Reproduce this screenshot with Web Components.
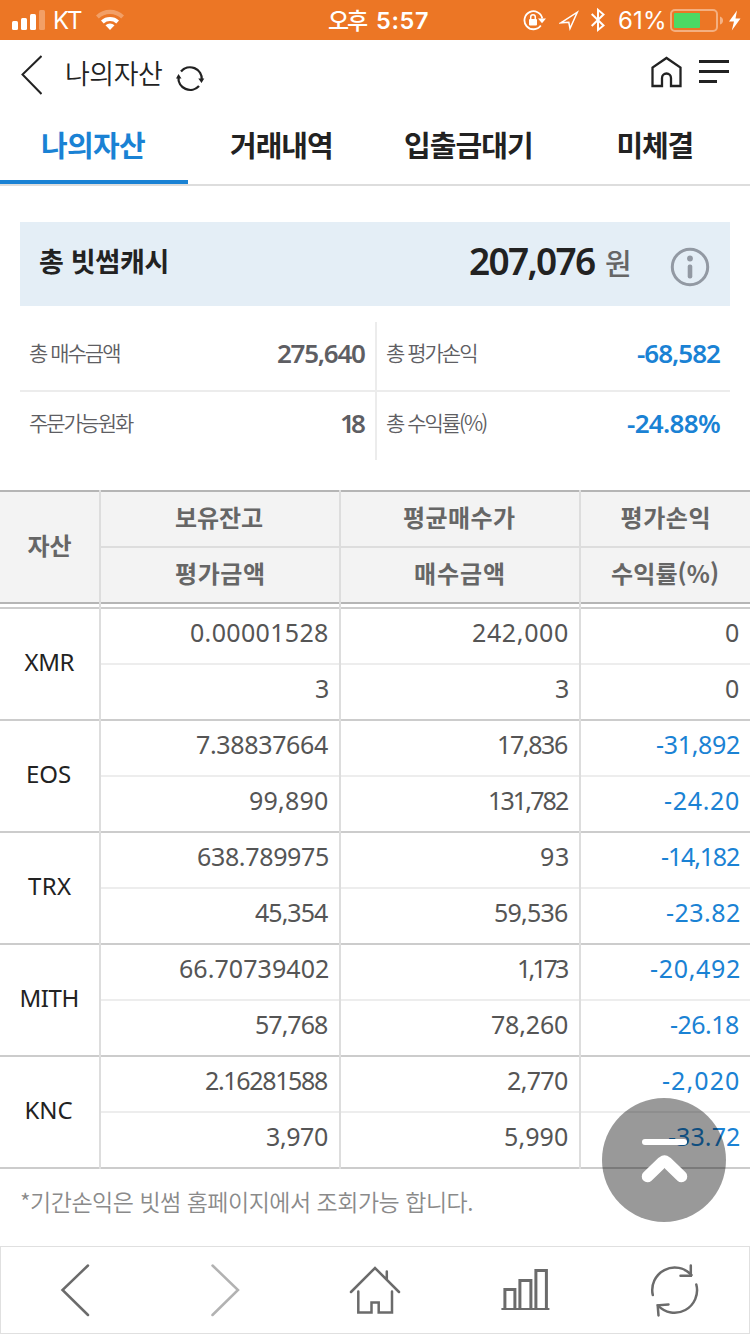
<!DOCTYPE html>
<html lang="ko">
<head>
<meta charset="utf-8">
<title>나의자산</title>
<style>
  body {
    margin: 0;
    background: #fff;
    color: #222;
    font-family: "Noto Sans CJK KR", sans-serif;
    line-height: 1;
  }
</style>
</head>
<body>
<wallet-app></wallet-app>

<script>
// One line of text spread over a fixed width (attribute w, in px)
class FitText extends HTMLElement {
  constructor () {
    super()
    this.shadow = this.attachShadow({ mode: 'open' })
  }

  connectedCallback () {
    this.shadow.innerHTML = /* html */ `
      <style>
        :host { display: block; flex: none; white-space: nowrap; line-height: 1; }
        span { display: block; }
      </style>
      <span><slot></slot></span>
    `
    const text = this.textContent
    const width = Number(this.getAttribute('w'))
    const style = getComputedStyle(this)
    const ctx = document.createElement('canvas').getContext('2d')
    ctx.font = `${style.fontWeight} ${style.fontSize} ${style.fontFamily}`
    const size = ctx.measureText(text)
    const ink = size.actualBoundingBoxRight + size.actualBoundingBoxLeft
    const span = this.shadow.querySelector('span')
    this.style.width = `${width}px`
    span.style.marginLeft = `${size.actualBoundingBoxLeft}px`
    if (text.length > 1) {
      span.style.letterSpacing = `${(width - ink) / (text.length - 1)}px`
    }
  }
}

class StatusBar extends HTMLElement {
  constructor () {
    super()
    this.shadow = this.attachShadow({ mode: 'open' })
  }

  connectedCallback () {
    this.shadow.innerHTML = /* html */ `
      <style>
        :host {
          display: flex;
          align-items: center;
          height: 40px;
          padding-left: 12px;
          background: #ec7625;
          color: #fff;
          font-family: Inter, "Noto Sans CJK KR", sans-serif;
          font-size: 24px;
        }
        svg { display: block; flex: none; }
        .carrier, .percent, .time { padding-top: 2px; }
        .carrier { margin-left: 10px; }
        .wifi { margin-left: 14px; }
        .time { margin-left: 205px; font-weight: 600; font-size: 23.5px; display: flex; gap: 9px; }
        .ampm { font-family: "Noto Sans CJK KR", sans-serif; font-weight: 500; font-size: 23px; margin-top: -1px; }
        .lock { margin-left: 95px; }
        .arrow { margin-left: 13px; }
        .bt { margin-left: 12px; }
        .percent { margin-left: 14px; }
        .battery { margin-left: 6px; }
        .bolt { margin-left: 5px; }
      </style>
      <svg width="33" height="40" fill="#fff">
        <rect y="21" width="6" height="9" rx="1.5"/>
        <rect x="9" y="18" width="6" height="12" rx="1.5"/>
        <rect x="18" y="14" width="6" height="16" rx="1.5"/>
        <rect x="27" y="10" width="6" height="20" rx="1.5" opacity=".3"/>
      </svg>
      <fit-text class="carrier" w="27">KT</fit-text>
      <svg class="wifi" width="28" height="40" fill="#fff">
        <path d="M0 15.500A20 20 0 0 1 28 15.500L25.200 18.500A16 16 0 0 0 2.800 18.500Z" opacity=".3"/>
        <path d="M5 20.500A13.500 13.500 0 0 1 23 20.500L20.300 23.400A9.500 9.500 0 0 0 7.700 23.400Z"/>
        <path d="M9.500 25.300A6.500 6.500 0 0 1 18.500 25.300L14 30Z"/>
      </svg>
      <div class="time"><fit-text class="ampm" w="39">오후</fit-text><fit-text w="51">5:57</fit-text></div>
      <svg class="lock" width="23" height="40" fill="none" stroke="#fff">
        <path d="M17.800 25.500A9 9 0 1 1 19.300 18.500" stroke-width="1.800"/>
        <path d="M15 18.500H23L19 23.300Z" fill="#fff" stroke="none"/>
        <rect x="6" y="19" width="8" height="6.500" rx="1" fill="#fff" stroke="none"/>
        <path d="M7.700 19.500V17a2.300 2.300 0 0 1 4.600 0V19.500" stroke-width="1.500"/>
      </svg>
      <svg class="arrow" width="20" height="40" fill="none" stroke="#fff" stroke-width="1.500">
        <path d="M1.800 22.800L18.300 12.200L11 28.500L9.800 22.300Z"/>
      </svg>
      <svg class="bt" width="14" height="40" fill="none" stroke="#fff" stroke-width="2">
        <path d="M.700 14L12.500 25.500L7 30V9.800L12.500 14.500L.700 26"/>
      </svg>
      <fit-text class="percent" w="45">61%</fit-text>
      <svg class="battery" width="54" height="40">
        <rect x="1" y="10" width="46" height="21" rx="4" fill="none" stroke="#fff" stroke-width="2" opacity=".42"/>
        <rect x="4" y="13" width="26" height="15" rx="1" fill="#4cd964"/>
        <path d="M50 16.500q3 1 3 4t-3 4z" fill="#fff" opacity=".45"/>
      </svg>
      <svg class="bolt" width="12" height="40" fill="#fff">
        <path d="M8 10.500L0 21.500H5L2.800 30.500L11.500 18.500H6.500Z"/>
      </svg>
    `
  }
}

class TitleBar extends HTMLElement {
  constructor () {
    super()
    this.shadow = this.attachShadow({ mode: 'open' })
  }

  connectedCallback () {
    this.shadow.innerHTML = /* html */ `
      <style>
        :host { display: flex; height: 66px; padding: 0 21px; align-items: flex-start; }
        svg { display: block; fill: none; stroke: #222; }
        .title { margin: 19px 0 0 25px; font-size: 27px; font-weight: 350; }
        .back { margin-top: 15px; }
        .reload { margin: 23px 0 0 14px; }
        .home { margin: 15px 0 0 auto; }
        .menu { margin: 20px 0 0 16px; }
      </style>
      <svg class="back" width="21" height="40"><path d="M20.500 1L1.500 19.500L20.500 39" stroke-width="2"/></svg>
      <fit-text class="title" w="95">${this.textContent}</fit-text>
      <svg class="reload" width="29" height="30" stroke-width="2.300">
        <path d="M2.500 14A11.800 11.800 0 0 0 23 23M25.800 17A11.800 11.800 0 0 0 5 8.500"/>
        <path d="M0 15.500L2.500 11L5.500 15.500ZM22.300 15.500H28.300L25.500 20Z" fill="#222" stroke="none"/>
      </svg>
      <svg class="home" width="32" height="33">
        <path d="M1.500 31V12.500L15.500 3L29.500 12.500V31H20V23a4.500 4.500 0 0 0-9 0v8Z" stroke-width="2.300"/>
      </svg>
      <svg class="menu" width="30" height="24"><path d="M0 1.500H30M0 11.500H30M0 21.500H18" stroke-width="3"/></svg>
    `
  }
}

class TabBar extends HTMLElement {
  constructor () {
    super()
    this.shadow = this.attachShadow({ mode: 'open' })
  }

  connectedCallback () {
    this.shadow.innerHTML = /* html */ `
      <style>
        :host {
          display: grid;
          grid-template-columns: 188px 187px 188px 187px;
          height: 78px;
          border-bottom: 2px solid #ddd;
          font-size: 29px;
          font-weight: 700;
        }
        div { display: flex; justify-content: center; padding: 24px 2px 0 0; }
        .on { color: #1a82d4; border-bottom: 4px solid #1a82d4; padding-right: 0; }
      </style>
      <div class="on"><fit-text w="102">나의자산</fit-text></div>
      <div><fit-text w="101">거래내역</fit-text></div>
      <div><fit-text w="126">입출금대기</fit-text></div>
      <div><fit-text w="74">미체결</fit-text></div>
    `
  }
}

class CashBanner extends HTMLElement {
  constructor () {
    super()
    this.shadow = this.attachShadow({ mode: 'open' })
  }

  connectedCallback () {
    this.shadow.innerHTML = /* html */ `
      <style>
        :host {
          display: flex;
          align-items: flex-start;
          height: 84px;
          margin: 36px 20px 0;
          padding: 0 20px;
          box-sizing: border-box;
          background: #e4eef6;
        }
        .label { margin-top: 25px; font-size: 27px; font-weight: 700; }
        .amount { margin: 20px 0 0 auto; font-family: "Noto Sans"; font-size: 37px; font-weight: 600; }
        .unit { margin: 26px 0 0 11px; font-size: 29px; font-weight: 500; color: #666; }
        svg { display: block; margin: 25px 0 0 39px; }
      </style>
      <fit-text class="label" w="125">총 빗썸캐시</fit-text>
      <fit-text class="amount" w="125">207,076</fit-text>
      <fit-text class="unit" w="25">원</fit-text>
      <svg width="40" height="40" fill="#9299a3">
        <circle cx="20" cy="20" r="17.700" fill="none" stroke="#9299a3" stroke-width="3"/>
        <circle cx="20" cy="11.500" r="2.900"/>
        <rect x="17.700" y="17.500" width="4.600" height="14" rx="2"/>
      </svg>
    `
  }
}

class SummaryItem extends HTMLElement {
  constructor () {
    super()
    this.shadow = this.attachShadow({ mode: 'open' })
  }

  connectedCallback () {
    const [labelWidth, valueWidth] = this.getAttribute('widths').split(' ')
    this.shadow.innerHTML = /* html */ `
      <style>
        :host { display: flex; justify-content: space-between; padding: 18px 10px 0; color: #5e5e63; }
        :host([loss]) { --value: #1a82d4; }
        .label { font-size: 21px; font-weight: 350; padding-top: 2px; }
        .value { font-family: "Noto Sans"; font-size: 26px; font-weight: 600; color: var(--value, #5e5e63); }
      </style>
      <fit-text class="label" w="${labelWidth}">${this.getAttribute('label')}</fit-text>
      <fit-text class="value" w="${valueWidth}">${this.getAttribute('value')}</fit-text>
    `
  }
}

class SummaryGrid extends HTMLElement {
  constructor () {
    super()
    this.shadow = this.attachShadow({ mode: 'open' })
  }

  connectedCallback () {
    this.shadow.innerHTML = /* html */ `
      <style>
        :host { display: grid; grid-template-columns: 355px 355px; margin: 16px 20px 30px; }
        .col { display: grid; grid-template-rows: 68px 70px; }
        .col + .col { border-left: 2px solid #ececec; }
        .col > :last-child { border-top: 2px solid #ececec; }
      </style>
      <div class="col">
        <summary-item label="총 매수금액" value="275,640" widths="88 87"></summary-item>
        <summary-item label="주문가능원화" value="18" widths="104 24"></summary-item>
      </div>
      <div class="col">
        <summary-item label="총 평가손익" value="-68,582" widths="88 83" loss></summary-item>
        <summary-item label="총 수익률(%)" value="-24.88%" widths="98 93" loss></summary-item>
      </div>
    `
  }
}

// A line of the asset table: the name, then three columns of two stacked cells.
// cells: "top:width bottom:width" for each column, separated by |
class AssetRow extends HTMLElement {
  constructor () {
    super()
    this.shadow = this.attachShadow({ mode: 'open' })
  }

  connectedCallback () {
    const [name, nameWidth] = this.getAttribute('name').split(':')
    const columns = this.getAttribute('cells').split('|').map(column => {
      const cells = column.split(' ').map(cell => {
        const [text, width] = cell.split(':')
        const loss = text.startsWith('-') ? 'loss' : ''
        return `<div class="cell ${loss}"><fit-text w="${width}">${text}</fit-text></div>`
      })
      return `<div class="column">${cells.join('')}</div>`
    })
    this.shadow.innerHTML = /* html */ `
      <style>
        :host {
          display: grid;
          grid-template-columns: 99px 240px 240px 171px;
          font-family: "Noto Sans", sans-serif;
          font-size: 25px;
          color: #555;
          --line: #ccc;
          --inner: #ededed;
        }
        :host([head]) {
          --line: #b5b5b5;
          --inner: #ddd;
          font-family: "Noto Sans CJK KR", sans-serif;
          font-size: 24px;
          font-weight: 700;
          color: #666;
        }
        .name, .cell { box-sizing: border-box; border-top: 2px solid var(--line); }
        .name { display: flex; justify-content: center; padding-top: 41px; font-size: 24px; color: #222; }
        .column { border-left: 2px solid #ddd; }
        .cell { display: flex; justify-content: flex-end; height: 56px; padding: 11px 11px 0 0; }
        .cell + .cell { border-top-color: var(--inner); }
        .loss { color: #1a82d4; }
        :host([head]) .name { background: #f3f3f3; color: #666; padding-top: 41px; border-bottom: 2px solid var(--line); margin-bottom: 3px; }
        :host([head]) .column { padding-bottom: 3px; }
        :host([head]) .cell { background: #f3f3f3; justify-content: center; padding: 13px 2px 0 0; }
        :host([head]) .cell + .cell { height: 58px; border-bottom: 2px solid var(--line); }
        :host([last]) .name, :host([last]) .cell + .cell { border-bottom: 2px solid var(--line); }
        :host([last]) .cell + .cell { height: 58px; }
      </style>
      <div class="name"><fit-text w="${nameWidth}">${name}</fit-text></div>
      ${columns.join('')}
    `
  }
}

class AssetTable extends HTMLElement {
  constructor () {
    super()
    this.shadow = this.attachShadow({ mode: 'open' })
  }

  connectedCallback () {
    this.shadow.innerHTML = /* html */ `
      <style>
        :host { display: block; }
      </style>
      <asset-row head name="자산:44" cells="보유잔고:88 평가금액:88|평균매수가:112 매수금액:88|평가손익:88 수익률(%):107"></asset-row>
      <asset-row name="XMR:50" cells="0.00001528:137 3:12|242,000:95 3:12|0:13 0:13"></asset-row>
      <asset-row name="EOS:43" cells="7.38837664:131 99,890:78|17,836:69 131,782:78|-31,892:82 -24.20:74"></asset-row>
      <asset-row name="TRX:43" cells="638.789975:130 45,354:73|93:27 59,536:73|-14,182:77 -23.82:72"></asset-row>
      <asset-row name="MITH:56" cells="66.70739402:148 57,768:72|1,173:49 78,260:76|-20,492:88 -26.18:68"></asset-row>
      <asset-row last name="KNC:46" cells="2.16281588:122 3,970:61|2,770:60 5,990:63|-2,020:76 -33.72:70"></asset-row>
    `
  }
}

class ScrollTopButton extends HTMLElement {
  constructor () {
    super()
    this.shadow = this.attachShadow({ mode: 'open' })
  }

  connectedCallback () {
    this.shadow.innerHTML = /* html */ `
      <style>
        :host { position: absolute; right: 24px; top: 1098px; }
        svg { display: block; }
      </style>
      <svg width="124" height="124" fill="none" stroke="#fff" stroke-linecap="round" stroke-linejoin="round">
        <circle cx="62" cy="62" r="62" fill="#000" fill-opacity=".4" stroke="none"/>
        <path d="M43 44H82" stroke-width="6"/>
        <path d="M45.500 78.500L60.500 64Q62.500 62.500 64.500 64L79.500 78.500" stroke-width="11.500"/>
      </svg>
    `
  }
}

class BottomNav extends HTMLElement {
  constructor () {
    super()
    this.shadow = this.attachShadow({ mode: 'open' })
  }

  connectedCallback () {
    this.shadow.innerHTML = /* html */ `
      <style>
        :host {
          display: grid;
          grid-template-columns: repeat(5, 1fr);
          place-items: center;
          box-sizing: border-box;
          height: 88px;
          border: 1px solid #e0e0e0;
        }
        svg { display: block; fill: none; stroke: #6b6b6b; stroke-width: 2.500; stroke-linecap: round; }
        .off { stroke: #b2b2b2; }
      </style>
      <svg width="60" height="60"><path d="M42 5.500L16.500 30L42 55"/></svg>
      <svg class="off" width="60" height="60"><path d="M17.500 5.500L43 30L17.500 55"/></svg>
      <svg width="60" height="60">
        <path d="M6 32L30 8L54 32M41.800 19V11.500M13.300 31.500V52.500H26.500V42.500H33.700V52.500H47V31.500"/>
      </svg>
      <svg width="60" height="60">
        <path d="M6.400 49H54.400" stroke-width="2" stroke-linecap="butt"/>
        <path d="M9.900 48.500V29.500H19.900V48.500M24.900 48.500V20.500H35.900V48.500M40.900 48.500V10.500H51.400V48.500" stroke-width="3" stroke-linecap="butt"/>
      </svg>
      <svg width="60" height="60">
        <path d="M8.800 35A22.500 22.500 0 0 1 47.500 15M52.300 24.500A22.500 22.500 0 0 1 14 45.500"/>
        <path d="M46.800 5.500V15.800H36.500M24.500 44.500L13.700 45.300L14.500 55.500" stroke-width="2.500" stroke-linejoin="miter"/>
      </svg>
    `
  }
}

class WalletApp extends HTMLElement {
  constructor () {
    super()
    this.shadow = this.attachShadow({ mode: 'open' })
  }

  connectedCallback () {
    this.shadow.innerHTML = /* html */ `
      <style>
        :host { display: flex; flex-direction: column; position: relative; width: 750px; height: 1334px; overflow: hidden; }
        .note { margin: 21px 0 0 21px; font-size: 23px; font-weight: 350; color: #8a8a8a; }
        bottom-nav { margin-top: auto; }
      </style>
      <status-bar></status-bar>
      <title-bar>나의자산</title-bar>
      <tab-bar></tab-bar>
      <cash-banner></cash-banner>
      <summary-grid></summary-grid>
      <asset-table></asset-table>
      <fit-text class="note" w="446">*기간손익은 빗썸 홈페이지에서 조회가능 합니다.</fit-text>
      <bottom-nav></bottom-nav>
      <scroll-top-button></scroll-top-button>
    `
  }
}

customElements.define('wallet-app', WalletApp)
customElements.define('status-bar', StatusBar)
customElements.define('title-bar', TitleBar)
customElements.define('tab-bar', TabBar)
customElements.define('cash-banner', CashBanner)
customElements.define('summary-grid', SummaryGrid)
customElements.define('summary-item', SummaryItem)
customElements.define('asset-table', AssetTable)
customElements.define('asset-row', AssetRow)
customElements.define('scroll-top-button', ScrollTopButton)
customElements.define('bottom-nav', BottomNav)
customElements.define('fit-text', FitText)
</script>
</body>
</html>
